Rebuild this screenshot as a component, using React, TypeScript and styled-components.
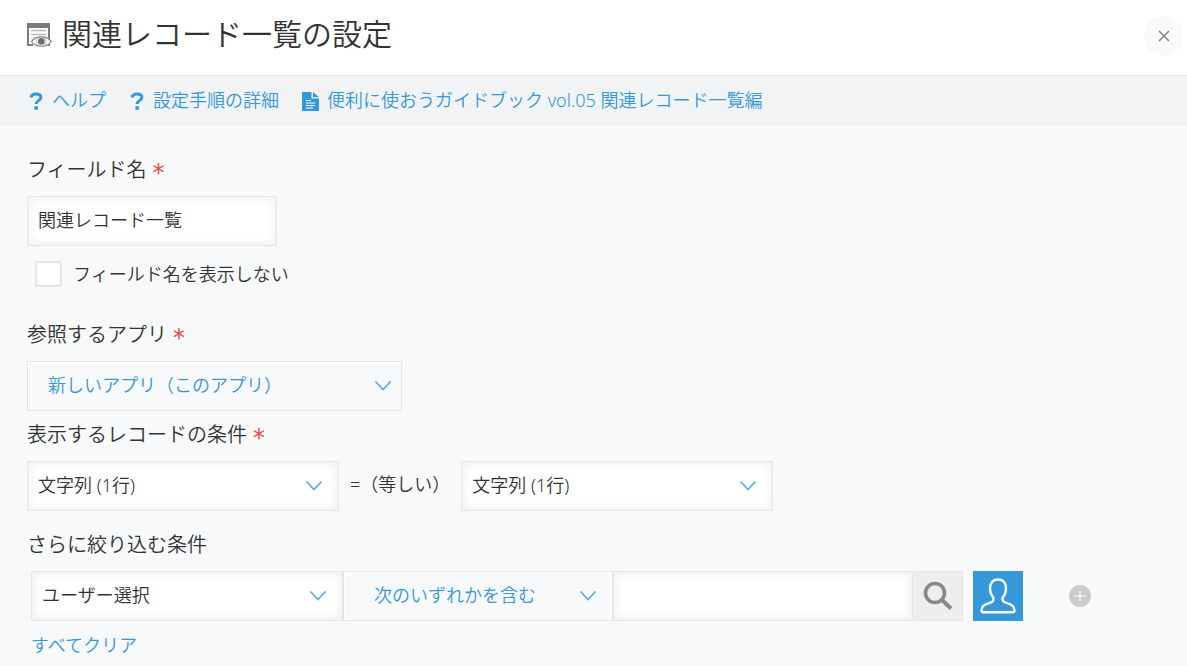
import React from "react";
import styled, { createGlobalStyle } from "styled-components";

const GlobalStyle = createGlobalStyle`
  *, *::before, *::after { box-sizing: border-box; }
  body {
    margin: 0;
    background: #f7f9fb;
    color: #333333;
    font-family: "Noto Sans", "Noto Sans CJK JP", sans-serif;
    font-size: 18px;
    font-weight: 350;
    line-height: 28px;
  }
  button, input, select { font: inherit; color: inherit; }
`;

const Header = styled.header`
  display: flex;
  align-items: center;
  justify-content: space-between;
  height: 76px;
  padding: 0 4px 4px 27px;
  background: #ffffff;
  border-bottom: 1px solid #e3e7e8;
`;

const Title = styled.h1`
  display: flex;
  align-items: center;
  gap: 10px;
  margin: 0;
  font-size: 30px;
  font-weight: 350;
  line-height: 44px;
  white-space: nowrap;

  span { padding-bottom: 4px; }
`;

const CloseButton = styled.button`
  display: flex;
  align-items: center;
  justify-content: center;
  width: 39px;
  height: 40px;
  padding: 0;
  border: 0;
  border-radius: 50%;
  background: #f7f9fa;
  color: #888888;
  cursor: pointer;
`;

const HelpBar = styled.nav`
  display: flex;
  flex-wrap: wrap;
  align-items: center;
  gap: 23px;
  min-height: 50px;
  padding: 0 28px;
  background: #f1f3f5;
`;

const TextLink = styled.a`
  color: #3498db;
  text-decoration: none;
`;

const HelpLink = styled(TextLink)`
  display: inline-flex;
  align-items: center;
  gap: 8px;

  svg { flex: none; }
  span { padding-bottom: 2px; }
`;

const Form = styled.form`
  display: flex;
  flex-direction: column;
  gap: 9px;
  padding: 29px 27px 6px;
`;

const Group = styled.div<{ $after?: number }>`
  display: flex;
  flex-direction: column;
  align-items: flex-start;
  gap: 11px;
  margin-bottom: ${(p) => p.$after ?? 0}px;
`;

const FieldLabel = styled.label`
  font-size: 20px;
  line-height: 30px;
`;

const Required = styled.span`
  margin-left: 6px;
  color: #e74c3c;
  font-family: "DejaVu Sans", sans-serif;
  font-size: 24px;
  font-weight: 400;
  line-height: 20px;
  vertical-align: -4px;
`;

const Row = styled.div<{ $gap?: number; $indent?: number }>`
  display: flex;
  align-items: center;
  gap: ${(p) => p.$gap ?? 0}px;
  padding-left: ${(p) => p.$indent ?? 0}px;
`;

const Operator = styled.span`
  padding-bottom: 4px;
`;

const TextInput = styled.input<{ $width: number }>`
  width: ${(p) => p.$width}px;
  height: 50px;
  padding: 0 10px 4px;
  border: 1px solid #e3e7e8;
  border-radius: 0;
  background: #ffffff;
  box-shadow: inset 2px 2px 8px #f1f1f1, inset -2px -2px 8px #f1f1f1;
  outline: none;
`;

const CheckLabel = styled.label`
  display: flex;
  align-items: center;
  gap: 11px;
  padding: 3px 0 0 8px;
`;

const Checkbox = styled.input`
  appearance: none;
  width: 27px;
  height: 26px;
  margin: 0;
  border: 2px solid #e3e7e8;
  background: #ffffff;
  box-shadow: inset 0 0 2px #e3e7e8;

  &:checked { background: #3498db; }
`;

const SelectBox = styled.div<{ $width: number; $edge: number }>`
  position: relative;
  width: ${(p) => p.$width}px;
  height: 50px;

  svg {
    position: absolute;
    right: ${(p) => p.$edge}px;
    top: 19px;
    pointer-events: none;
  }
`;

const Select = styled.select<{ $link?: boolean; $inset: number }>`
  appearance: none;
  width: 100%;
  height: 100%;
  padding: 0 40px 2px ${(p) => p.$inset}px;
  border: 1px solid #e3e7e8;
  border-radius: 0;
  outline: none;
  background: ${(p) => (p.$link ? "#f7f9fa" : "#ffffff")};
  color: ${(p) => (p.$link ? "#3498db" : "#333333")};
  box-shadow: ${(p) =>
    p.$link
      ? "inset 1px 1px 0 #ffffff"
      : "inset 2px 2px 8px #f1f1f1, inset -2px -2px 8px #f1f1f1"};
`;

const IconButton = styled.button<{ $tone: "search" | "user" | "plain" }>`
  display: flex;
  align-items: center;
  justify-content: center;
  width: 50px;
  height: 50px;
  padding: 0;
  cursor: pointer;
  border: ${(p) => (p.$tone === "search" ? "1px solid #e3e7e8" : "0")};
  border-left: 0;
  background: ${(p) =>
    p.$tone === "search" ? "#eeeeee" : p.$tone === "user" ? "#3498db" : "transparent"};
`;

const ClearRow = styled.div`
  padding: 1px 0 0 4px;
`;

const RelatedIcon = () => (
  <svg width="25" height="26" viewBox="0 0 25 26" aria-hidden="true">
    <rect x="0" y="0" width="23" height="23" fill="#7a7a7a" />
    <rect x="2" y="5" width="19" height="18" fill="#fff" />
    <path d="M4 7.5h15M4 11.500h15" stroke="#b9b9b9" strokeWidth="1.500" />
    <path d="M4 15h4M4 19h2" stroke="#cfcfcf" strokeWidth="1" />
    <path d="M0 22h6" stroke="#7a7a7a" strokeWidth="2" />
    <path d="M3.500 18.500C9 11 20 11 25 18.500C20 26 9 26 3.500 18.500Z" fill="#fff" />
    <path
      d="M4.500 18.500C9 12.200 20 12.200 24.300 18.500C20 24.800 9 24.800 4.500 18.500Z"
      fill="#fff"
      stroke="#7a7a7a"
      strokeWidth="1.200"
    />
    <circle cx="14.400" cy="18.400" r="4.800" fill="none" stroke="#a5a5a5" strokeWidth="0.800" />
    <circle cx="14.400" cy="18.400" r="3.300" fill="#6e6e6e" />
  </svg>
);

const CloseIcon = () => (
  <svg width="12" height="12" viewBox="0 0 12 12" aria-hidden="true">
    <path d="M1 1l10 10M11 1L1 11" stroke="currentColor" strokeWidth="1.600" />
  </svg>
);

const QuestionIcon = () => (
  <svg width="16" height="18" viewBox="0 0 16 18" aria-hidden="true">
    <path
      d="M3 5.400C3.400 3 5.200 2 8 2C11 2 12.900 3.200 12.900 5.400C12.900 8.500 8.200 8.300 8.200 12"
      fill="none"
      stroke="#3498db"
      strokeWidth="3"
    />
    <rect x="6.400" y="14.200" width="3.500" height="3.500" fill="#3498db" />
  </svg>
);

const DocumentIcon = () => (
  <svg width="17" height="19" viewBox="0 0 17 19" aria-hidden="true">
    <path d="M0 0h9.500v6.500H17V19H0z" fill="#3498db" />
    <path d="M11 0l6 5.200h-6z" fill="#3498db" />
    <path d="M4 8.500h5M4 11h9M4 13.500h9M4 16h7" stroke="#fff" strokeWidth="1.200" />
  </svg>
);

const ChevronIcon = () => (
  <svg width="18" height="12" viewBox="0 0 18 12" aria-hidden="true">
    <path d="M1.500 1.500L9 9.500l7.500-8" fill="none" stroke="#5dade2" strokeWidth="1.800" />
  </svg>
);

const SearchIcon = () => (
  <svg width="30" height="30" viewBox="0 0 30 30" aria-hidden="true">
    <circle cx="12" cy="12" r="9.500" fill="none" stroke="#888" strokeWidth="3.600" />
    <path d="M18.500 18.500l9.500 9" stroke="#888" strokeWidth="4" />
  </svg>
);

const UserIcon = () => (
  <svg width="36" height="36" viewBox="0 0 36 36" aria-hidden="true">
    <path
      d="M18 1.500C12.800 1.500 10 5.200 10 10C10 14 11.500 17.500 13.400 19.600C14 23 12.500 24 9 25.200C4 27 1.500 28.200 1.500 32.500Q1.500 34.300 3.500 34.300H32.500Q34.500 34.300 34.500 32.500C34.500 28.200 32 27 27 25.200C23.500 24 22 23 22.600 19.600C24.500 17.500 26 14 26 10C26 5.200 23.200 1.500 18 1.500Z"
      fill="none"
      stroke="#fff"
      strokeWidth="2.400"
      strokeLinejoin="round"
    />
  </svg>
);

const PlusIcon = () => (
  <svg width="22" height="22" viewBox="0 0 22 22" aria-hidden="true">
    <circle cx="11" cy="11" r="11" fill="#cacbcc" />
    <path d="M11 5.500v11M5.500 11h11" stroke="#f0f1f2" strokeWidth="1.600" />
  </svg>
);

type DropDownProps = {
  id?: string;
  label?: string;
  width: number;
  inset?: number;
  edge?: number;
  link?: boolean;
  text: string;
};

const DropDown = ({ id, label, width, inset = 10, edge = 16, link, text }: DropDownProps) => (
  <SelectBox $width={width} $edge={edge}>
    <Select id={id} aria-label={label} $link={link} $inset={inset}>
      <option>{text}</option>
    </Select>
    <ChevronIcon />
  </SelectBox>
);

export default function App() {
  return (
    <div lang="ja">
      <GlobalStyle />
      <Header>
        <Title>
          <RelatedIcon />
          <span>関連レコード一覧の設定</span>
        </Title>
        <CloseButton type="button" aria-label="閉じる">
          <CloseIcon />
        </CloseButton>
      </Header>
      <HelpBar>
        <HelpLink href="#help">
          <QuestionIcon />
          <span>ヘルプ</span>
        </HelpLink>
        <HelpLink href="#steps">
          <QuestionIcon />
          <span>設定手順の詳細</span>
        </HelpLink>
        <HelpLink href="#guide">
          <DocumentIcon />
          <span>便利に使おうガイドブック vol.05 関連レコード一覧編</span>
        </HelpLink>
      </HelpBar>
      <Form>
        <Group $after={23}>
          <FieldLabel htmlFor="field-name">
            フィールド名<Required>*</Required>
          </FieldLabel>
          <TextInput id="field-name" $width={250} defaultValue="関連レコード一覧" />
          <CheckLabel>
            <Checkbox type="checkbox" />
            フィールド名を表示しない
          </CheckLabel>
        </Group>
        <Group>
          <FieldLabel htmlFor="app">
            参照するアプリ<Required>*</Required>
          </FieldLabel>
          <DropDown id="app" width={375} inset={20} edge={10} link text="新しいアプリ（このアプリ）" />
        </Group>
        <Group $after={10}>
          <FieldLabel htmlFor="own-field">
            表示するレコードの条件<Required>*</Required>
          </FieldLabel>
          <Row $gap={11}>
            <DropDown id="own-field" width={312} text="文字列 (1行)" />
            <Operator>=（等しい）</Operator>
            <DropDown label="参照先のフィールド" width={312} text="文字列 (1行)" />
          </Row>
        </Group>
        <Group>
          <FieldLabel htmlFor="filter-field">さらに絞り込む条件</FieldLabel>
          <Row $gap={10} $indent={4}>
            <Row>
              <DropDown id="filter-field" width={312} text="ユーザー選択" />
              <DropDown label="演算子" width={270} inset={30} link text="次のいずれかを含む" />
              <TextInput aria-label="ユーザー" $width={300} />
              <IconButton type="button" $tone="search" aria-label="検索">
                <SearchIcon />
              </IconButton>
            </Row>
            <IconButton type="button" $tone="user" aria-label="ユーザーを選択">
              <UserIcon />
            </IconButton>
            <Row $indent={22}>
              <IconButton type="button" $tone="plain" aria-label="条件を追加">
                <PlusIcon />
              </IconButton>
            </Row>
          </Row>
        </Group>
        <ClearRow>
          <TextLink href="#clear">すべてクリア</TextLink>
        </ClearRow>
      </Form>
    </div>
  );
}
